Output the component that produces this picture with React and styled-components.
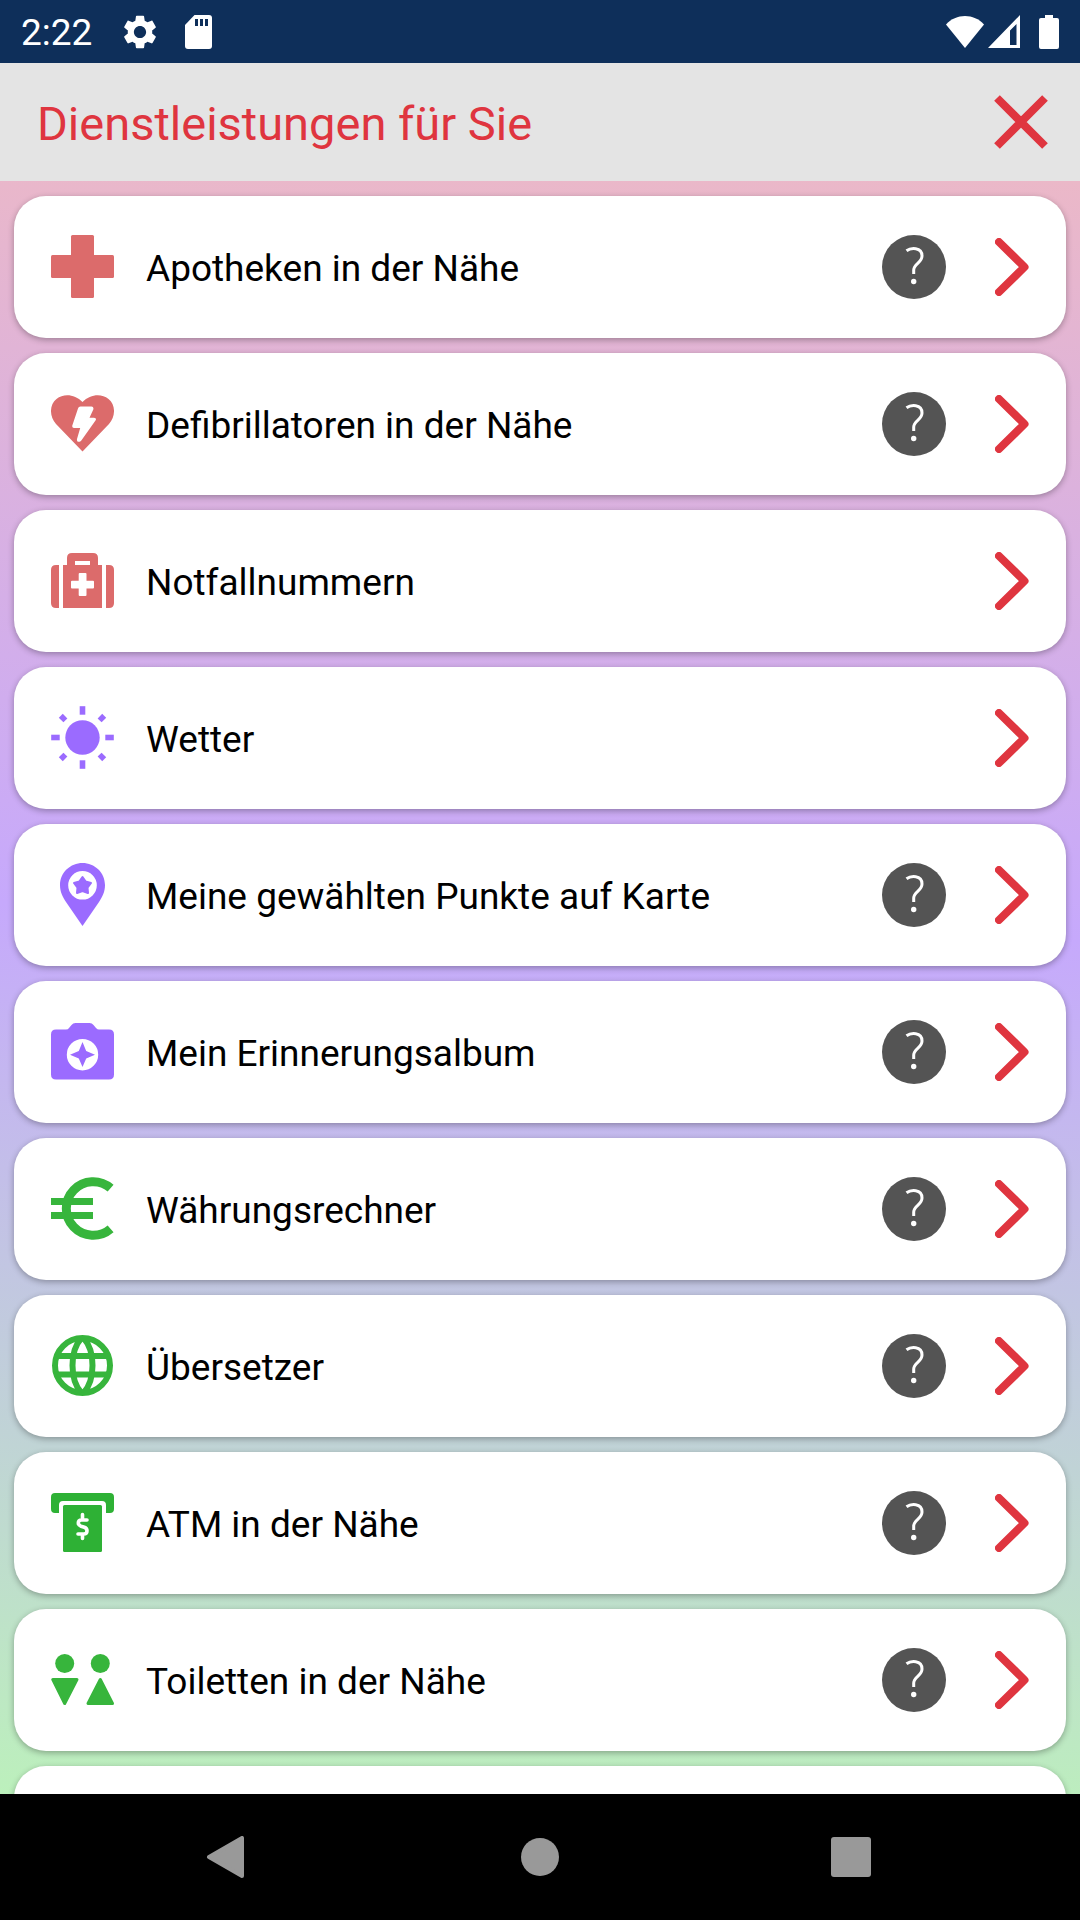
import React from 'react';
import styled, { createGlobalStyle } from 'styled-components';

const GlobalStyle = createGlobalStyle`
  * {
    box-sizing: border-box;
  }

  body {
    margin: 0;
    background: #000;
    font-family: Roboto, "Liberation Sans", sans-serif;
  }

  button {
    border: 0;
    padding: 0;
    background: none;
    font: inherit;
    color: inherit;
    cursor: pointer;
  }
`;

const RED = '#dc6b6b';
const PURPLE = '#9b6bff';
const GREEN = '#37b53c';

const icons = {
  pharmacy: (
    <>
      <rect x="20" y="0" width="23" height="63" rx="1.5" />
      <rect x="0" y="20" width="63" height="23" rx="1.5" />
    </>
  ),
  defibrillator: (
    <path
      fillRule="evenodd"
      d="M31.5 59.5L5 32C-2 24-1.5 12.5 5.5 7C13 1 24 2.5 31.5 10C39 2.5 50 1 57.5 7C64.5 12.5 65 24 58 32ZM29.5 14.5Q27.5 14.5 27 16.5L21.3 33.5Q20.8 36 23 36H29.2L26 47C25.5 50 28.5 51 30.5 48.3L44.5 28.5Q46 26 43 25.7H38.5L42.3 17.5Q43 14.8 40.5 14.5Z"
    />
  ),
  emergency: (
    <>
      <path d="M8 16V59H5Q0 59 0 54V21Q0 16 5 16Z" />
      <path d="M55 16V59H58Q63 59 63 54V21Q63 16 58 16Z" />
      <path
        fillRule="evenodd"
        d="M12 16H16V9Q16 4 21 4H42Q47 4 47 9V16H51V59H12ZM24 12V16H39V12ZM27.7 25V31.7H21Q20 31.7 20 32.7V38.5Q20 39.5 21 39.5H27.7V46Q27.7 47 28.7 47H34.5Q35.5 47 35.5 46V39.5H42Q43 39.5 43 38.5V32.7Q43 31.7 42 31.7H35.5V25Q35.5 24 34.5 24H28.7Q27.7 24 27.7 25Z"
      />
    </>
  ),
  weather: (
    <>
      <circle cx="31.5" cy="31.5" r="17.2" />
      {[0, 45, 90, 135, 180, 225, 270, 315].map((angle) => (
        <rect
          key={angle}
          x="28.7"
          y={angle % 90 ? 0.8 : 0.2}
          width="5.6"
          height={angle % 90 ? 6.5 : 8.5}
          transform={`rotate(${angle} 31.5 31.5)`}
        />
      ))}
    </>
  ),
  mapPoint: (
    <>
      <path
        fillRule="evenodd"
        d="M31.5 0C43.5 0 54 9.5 54 22C54 29 51.5 33.5 48 39L31.5 63L15 39C11.5 33.5 9 29 9 22C9 9.5 19.5 0 31.5 0ZM31.5 8A14.3 14.3 0 1 0 31.5 36.6A14.3 14.3 0 1 0 31.5 8Z"
      />
      <path
        d="M31.5 14L34.5 18.4L40 20L36.5 24.6L37 30L31.5 28L26 30L26.5 24.6L23 20L28.5 18.4Z"
        stroke="currentColor"
        strokeWidth="2"
        strokeLinejoin="round"
      />
    </>
  ),
  album: (
    <path
      fillRule="evenodd"
      d="M5 9.5H15Q17 9.5 18 8L20.5 5Q22 3 24.5 3H38.5Q41 3 42.5 5L45 8Q46.5 9.5 48 9.5H58Q63 9.5 63 14.5V54.5Q63 59.5 58 59.5H5Q0 59.5 0 54.5V14.5Q0 9.5 5 9.5ZM31.5 19A15.7 15.7 0 1 0 31.5 50.4A15.7 15.7 0 1 0 31.5 19ZM31.5 22L35.2 31L44 34.7L35.2 38.4L31.5 47L27.8 38.4L19 34.7L27.8 31Z"
    />
  ),
  euro: (
    <>
      <path
        d="M59.6 11.2A26.8 26.8 0 1 0 59.6 51.8"
        fill="none"
        stroke="currentColor"
        strokeWidth="9"
      />
      <rect x="0" y="21" width="42" height="7" />
      <rect x="0" y="35" width="42" height="7" />
    </>
  ),
  globe: (
    <g fill="none" stroke="currentColor" strokeWidth="6">
      <circle cx="31.5" cy="31.5" r="27.5" />
      <path d="M6 22H57M6 40.5H57" />
      <path d="M30.5 4C18.5 17 18.5 46 30.5 59M32.5 4C44.5 17 44.5 46 32.5 59" />
    </g>
  ),
  atm: (
    <>
      <path d="M4 2H59Q63 2 63 6V18Q63 22 59 22H55V14Q55 10 51 10H12Q8 10 8 14V22H4Q0 22 0 18V6Q0 2 4 2Z" />
      <rect x="12" y="14" width="39" height="47" rx="1.5" />
      <path
        d="M36 29H30.5Q27.3 29 27.3 32Q27.3 34.3 30 35.2L33.3 36.2Q36 37.2 36 39.7Q36 43 32.7 43H27M31.5 23.5V28.5M31.5 43.5V47.5"
        fill="none"
        stroke="#fff"
        strokeWidth="3.6"
        strokeLinecap="round"
      />
    </>
  ),
  toilets: (
    <>
      <circle cx="13.7" cy="15.5" r="9.5" />
      <circle cx="49.3" cy="15.5" r="9.5" />
      <g stroke="currentColor" strokeWidth="3" strokeLinejoin="round">
        <path d="M1.8 31.5H26L13.7 55.5Z" />
        <path d="M37 55.5H61.5L49.3 31.5Z" />
      </g>
    </>
  ),
};

const services = [
  { label: 'Apotheken in der Nähe', icon: 'pharmacy', color: RED, help: true },
  { label: 'Defibrillatoren in der Nähe', icon: 'defibrillator', color: RED, help: true },
  { label: 'Notfallnummern', icon: 'emergency', color: RED, help: false },
  { label: 'Wetter', icon: 'weather', color: PURPLE, help: false },
  { label: 'Meine gewählten Punkte auf Karte', icon: 'mapPoint', color: PURPLE, help: true },
  { label: 'Mein Erinnerungsalbum', icon: 'album', color: PURPLE, help: true },
  { label: 'Währungsrechner', icon: 'euro', color: GREEN, help: true },
  { label: 'Übersetzer', icon: 'globe', color: GREEN, help: true },
  { label: 'ATM in der Nähe', icon: 'atm', color: '#2eb135', help: true },
  { label: 'Toiletten in der Nähe', icon: 'toilets', color: GREEN, help: true },
];

const StatusIcons = () => (
  <StatusGroup>
    <svg width="40" height="34" viewBox="0 0 40 34" fill="#fff">
      <path d="M20 33L1 9.5C11-2 29-2 39 9.5Z" />
    </svg>
    <SignalIcon width="32" height="34" viewBox="0 0 32 34" fill="#fff">
      <path fillRule="evenodd" d="M32 0V33H0ZM28.5 9L22 15.5V30H28.5Z" />
    </SignalIcon>
    <BatteryIcon width="20" height="34" viewBox="0 0 20 34" fill="#fff">
      <path d="M6 0H14V3H18Q20 3 20 5V32Q20 34 18 34H2Q0 34 0 32V5Q0 3 2 3H6Z" />
    </BatteryIcon>
  </StatusGroup>
);

const ServiceRow = ({ service }) => (
  <Card>
    <ServiceIcon viewBox="0 0 63 63" fill="currentColor" $color={service.color} aria-hidden="true">
      {icons[service.icon]}
    </ServiceIcon>
    <Label>{service.label}</Label>
    {service.help && (
      <HelpButton type="button" aria-label="Hilfe">
        <svg width="64" height="64" viewBox="0 0 64 64" fill="none">
          <path
            d="M24.5 15.8C28.5 12.8 40 11.5 40 21C40 28 31.7 28.500 31.7 35V39"
            stroke="#fff"
            strokeWidth="3"
          />
          <circle cx="31.7" cy="46.5" r="2.7" fill="#fff" />
        </svg>
      </HelpButton>
    )}
    <OpenButton type="button" aria-label={service.label}>
      <svg width="34" height="58" viewBox="0 0 34 58" fill="none">
        <path
          d="M4 4L29.5 29L4 54"
          stroke="#df353f"
          strokeWidth="8"
          strokeLinecap="round"
          strokeLinejoin="round"
        />
      </svg>
    </OpenButton>
  </Card>
);

const App = () => {
  return (
    <Screen>
      <GlobalStyle />
      <StatusBar>
        <StatusGroup>
          <Clock>2:22</Clock>
          <GearIcon width="34" height="34" viewBox="2 2 20 20" fill="#fff">
            <path d="M19.14 12.94c.04-.3.06-.61.06-.94 0-.32-.02-.64-.07-.94l2.03-1.58c.18-.14.23-.41.12-.61l-1.92-3.32c-.12-.22-.37-.29-.59-.22l-2.39.96c-.5-.38-1.03-.7-1.62-.94l-.36-2.54c-.04-.24-.24-.41-.48-.41h-3.84c-.24 0-.43.17-.47.41l-.36 2.54c-.59.24-1.13.57-1.62.94l-2.39-.96c-.22-.08-.47 0-.59.22L2.74 8.87c-.12.21-.08.47.12.61l2.03 1.58c-.05.3-.09.63-.09.94s.02.64.07.94l-2.03 1.58c-.18.14-.23.41-.12.61l1.92 3.32c.12.22.37.29.59.22l2.39-.96c.5.38 1.03.7 1.62.94l.36 2.54c.05.24.24.41.48.41h3.84c.24 0 .44-.17.47-.41l.36-2.54c.59-.24 1.13-.56 1.62-.94l2.39.96c.22.08.47 0 .59-.22l1.92-3.32c.12-.22.07-.47-.12-.61l-2.01-1.58zM12 15.6c-1.98 0-3.6-1.62-3.6-3.6s1.62-3.6 3.6-3.6 3.6 1.62 3.6 3.6-1.62 3.6-3.6 3.6z" />
          </GearIcon>
          <CardIcon width="27" height="34" viewBox="0 0 27 34">
            <path d="M9.5 0H24Q27 0 27 3V31Q27 34 24 34H3Q0 34 0 31V10Z" fill="#fff" />
            <path d="M10 4H13V11H10ZM15 4H18V11H15ZM20 4H23V11H20Z" fill="#0e2f5a" />
          </CardIcon>
        </StatusGroup>
        <StatusIcons />
      </StatusBar>

      <Header>
        <Title>Dienstleistungen für Sie</Title>
        <CloseButton type="button" aria-label="Schließen">
          <svg width="54" height="54" viewBox="0 0 54 54">
            <path d="M3 3L51 51M51 3L3 51" stroke="#df353f" strokeWidth="8" />
          </svg>
        </CloseButton>
      </Header>

      <List>
        {services.map((service) => (
          <ServiceRow key={service.label} service={service} />
        ))}
        <Card />
      </List>

      <NavBar>
        <NavButton type="button" aria-label="Zurück">
          <svg width="46" height="42" viewBox="-2 0 46 42">
            <path d="M1 21L34 2V40Z" fill="#999" stroke="#999" strokeWidth="4" strokeLinejoin="round" />
          </svg>
        </NavButton>
        <NavButton type="button" aria-label="Startseite">
          <svg width="46" height="42" viewBox="-2 0 46 42">
            <circle cx="21" cy="21" r="19" fill="#999" />
          </svg>
        </NavButton>
        <NavButton type="button" aria-label="Übersicht">
          <svg width="46" height="42" viewBox="-2 0 46 42">
            <rect x="1" y="1" width="40" height="40" rx="3" fill="#999" />
          </svg>
        </NavButton>
      </NavBar>
    </Screen>
  );
};

const Screen = styled.div`
  display: flex;
  flex-direction: column;
  height: 100vh;
  overflow: hidden;
`;

const StatusBar = styled.div`
  flex: none;
  display: flex;
  align-items: center;
  justify-content: space-between;
  height: 63px;
  padding: 0 21px;
  background: #0e2f5a;
  color: #fff;
`;

const StatusGroup = styled.div`
  display: flex;
  align-items: center;
`;

const Clock = styled.span`
  padding-top: 2px;
  font-size: 37px;
  line-height: 44px;
`;

const GearIcon = styled.svg`
  margin-left: 31px;
`;

const CardIcon = styled.svg`
  margin-left: 28px;
`;

const SignalIcon = styled.svg`
  margin-left: 3px;
`;

const BatteryIcon = styled.svg`
  margin-left: 19px;
`;

const Header = styled.header`
  flex: none;
  display: flex;
  align-items: center;
  justify-content: space-between;
  height: 118px;
  padding: 0 32px 0 37px;
  background: #e4e4e4;
  color: #df353f;
`;

const Title = styled.h1`
  margin: 0;
  padding-top: 4px;
  font-size: 47px;
  line-height: 56px;
  font-weight: 400;
`;

const CloseButton = styled.button`
  display: flex;
`;

const List = styled.main`
  flex: 1;
  min-height: 0;
  display: flex;
  flex-direction: column;
  gap: 15px;
  padding: 15px 14px 0;
  overflow: hidden;
  background: linear-gradient(182deg, #ebb8c8 0%, #c6a9fc 46%, #bcf0bc 100%);
`;

const Card = styled.section`
  flex: none;
  display: flex;
  align-items: center;
  height: 142px;
  padding: 0 37px;
  border-radius: 32px;
  background: #fff;
  box-shadow: 0 2px 6px rgba(0, 0, 0, 0.3);
`;

const ServiceIcon = styled.svg`
  flex: none;
  width: 63px;
  height: 63px;
  margin-bottom: 2px;
  color: ${(props) => props.$color};
`;

const Label = styled.span`
  flex: 1;
  margin-left: 32px;
  padding-top: 4px;
  font-size: 37px;
  line-height: 44px;
  color: #000;
`;

const HelpButton = styled.button`
  display: flex;
  margin-right: 49px;
  border-radius: 50%;
  background: #545454;
`;

const OpenButton = styled.button`
  display: flex;
`;

const NavBar = styled.nav`
  flex: none;
  display: flex;
  align-items: center;
  justify-content: space-around;
  height: 126px;
  padding: 0 74px;
  background: #000;
`;

const NavButton = styled.button`
  display: flex;
`;

export default App;
